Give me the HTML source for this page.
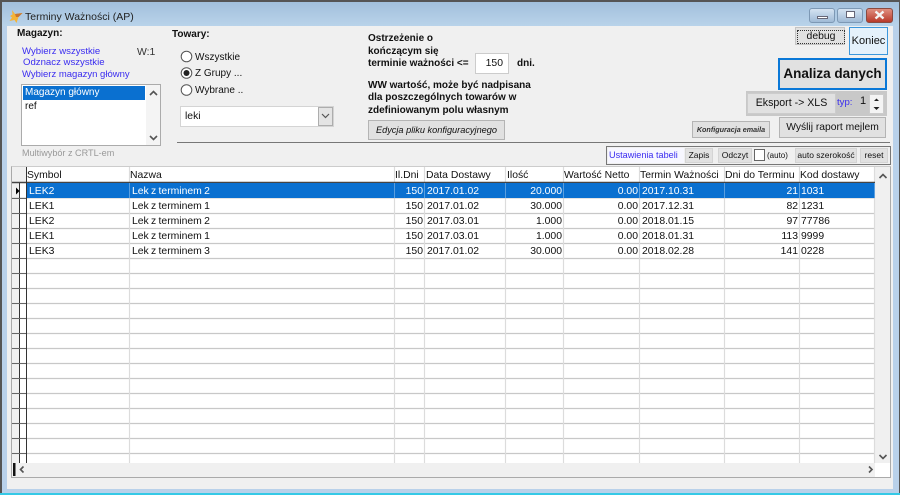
<!DOCTYPE html>
<html><head><meta charset="utf-8">
<style>
html,body{margin:0;padding:0;width:900px;height:495px;overflow:hidden;background:#fff}
#w{position:relative;width:900px;height:495px;overflow:hidden;font-family:"Liberation Sans",sans-serif;font-size:10.4px;color:#111;filter:blur(.35px)}
#w div,#w span.a{position:absolute;white-space:nowrap;box-sizing:border-box}
.b{background:#e1e1e1;border:1px solid #b4b4b4;text-align:center}
.l{color:#3a2cf0}
.h{font-weight:bold}
.c{height:15px;line-height:15px;overflow:hidden;margin-top:1px}
.r{text-align:right}
.n{word-spacing:-.6px}
</style></head><body><div id="w">
<div style="left:0;top:0;width:900px;height:495px;background:#b9d1ea"></div>
<div style="left:0;top:0;width:900px;height:26px;background:linear-gradient(#a0bedb,#b9d3ea)"></div>
<div style="left:0;top:0;width:900px;height:1.5px;background:#555"></div>
<div style="left:0;top:0;width:1.5px;height:495px;background:#555"></div>
<div style="left:898.5px;top:0;width:1.5px;height:495px;background:#555"></div>
<div style="left:0;top:493px;width:900px;height:2px;background:#35c9e6"></div>
<div style="left:7px;top:26px;width:886px;height:463px;background:#f0f0f0"></div>

<svg style="position:absolute;left:9px;top:10px" width="14" height="14" viewBox="0 0 14 14"><path d="M3 0 L6 4 L13.5 3 L9.5 7 L7.5 13 L5.5 10 L0.5 11 L3 7.5 L1 6 L3.5 4.5Z" fill="#f5b335"/><path d="M6 4 L13.5 3 L9.5 7 L7 7Z" fill="#c9752e"/></svg>
<div style="left:25px;top:10px;font-size:10.5px;line-height:14px;color:#222">Terminy Ważności (AP)</div>

<div style="left:809px;top:8px;width:26px;height:15px;border:1px solid #7d98b4;border-radius:3px;background:linear-gradient(#d5e3f1,#9fbad6)"></div>
<div style="left:817px;top:16px;width:11px;height:3px;background:#fff;border:1px solid #667"></div>
<div style="left:837px;top:8px;width:26px;height:15px;border:1px solid #7d98b4;border-radius:3px;background:linear-gradient(#d5e3f1,#9fbad6)"></div>
<div style="left:846px;top:11px;width:9px;height:7px;background:#fff;border:1.5px solid #667"></div>
<div style="left:866px;top:8px;width:27px;height:15px;border:1px solid #8a4a40;border-radius:3px;background:linear-gradient(#e08f80,#b8392a)"></div>
<svg style="position:absolute;left:873px;top:10px" width="13" height="10" viewBox="0 0 13 10"><path d="M2.5 1.5 L10.5 8.5 M10.5 1.5 L2.5 8.5" stroke="#f4f4f4" stroke-width="2.4"/></svg>

<div class="h" style="left:17px;top:27px;line-height:13px;font-size:10px">Magazyn:</div>
<div class="l" style="left:22px;top:46px;line-height:12px;font-size:9.6px">Wybierz wszystkie</div>
<div class="l" style="left:23px;top:57px;line-height:12px;font-size:9.6px">Odznacz wszystkie</div>
<div class="l" style="left:22px;top:69px;line-height:12px;font-size:9.5px">Wybierz magazyn główny</div>
<div style="left:137px;top:46px;line-height:13px;color:#333">W:1</div>
<div style="left:21px;top:84px;width:140px;height:62px;background:#fff;border:1px solid #ababab"></div>
<div style="left:146px;top:85px;width:14px;height:60px;background:#f4f4f4"></div>
<div style="left:23px;top:86px;width:122px;height:14px;background:#0a70d0;color:#fff;line-height:14px;padding-left:2px;font-size:10px">Magazyn główny</div>
<div style="left:25px;top:100px;line-height:14px;font-size:10px">ref</div>
<svg style="position:absolute;left:148px;top:88px" width="11" height="55" viewBox="0 0 11 55"><path d="M2 7 L5.5 3.5 L9 7" fill="none" stroke="#555" stroke-width="1.6"/><path d="M2 48 L5.5 51.5 L9 48" fill="none" stroke="#555" stroke-width="1.6"/></svg>
<div style="left:22px;top:147px;font-size:9.1px;line-height:12px;color:#999">Multiwybór z CRTL-em</div>

<div class="h" style="left:172px;top:28px;line-height:13px;font-size:10px">Towary:</div>
<svg style="position:absolute;left:180px;top:50px" width="14" height="48" viewBox="0 0 14 48"><circle cx="6.5" cy="6.5" r="5.3" fill="#fff" stroke="#555"/><circle cx="6.5" cy="23" r="5.3" fill="#fff" stroke="#555"/><circle cx="6.5" cy="23" r="3" fill="#222"/><circle cx="6.5" cy="40" r="5.3" fill="#fff" stroke="#555"/></svg>
<div style="left:195px;top:51px;line-height:13px;font-size:10px">Wszystkie</div>
<div style="left:195px;top:67px;line-height:13px;font-size:10px">Z Grupy ...</div>
<div style="left:195px;top:84px;line-height:13px;font-size:10px">Wybrane ..</div>
<div style="left:180px;top:106px;width:154px;height:21px;background:#fff;border:1px solid #d4d4d4;line-height:19px;padding-left:4px">leki</div>
<div style="left:318px;top:107px;width:15px;height:19px;background:#e4e4e4;border:1px solid #adadad"></div>
<svg style="position:absolute;left:320px;top:112px" width="11" height="8" viewBox="0 0 11 8"><path d="M2 2 L5.5 5.5 L9 2" fill="none" stroke="#555" stroke-width="1.2"/></svg>
<div style="left:177px;top:142px;width:713px;height:1px;background:#777"></div>

<div class="h" style="left:368px;top:32px;line-height:13px;font-size:10px">Ostrzeżenie o</div>
<div class="h" style="left:368px;top:45px;line-height:13px;font-size:10px">kończącym się</div>
<div class="h" style="left:368px;top:57px;line-height:13px;font-size:10px">terminie ważności &lt;=</div>
<div style="left:475px;top:53px;width:34px;height:21px;background:#fff;border:1px solid #ccc;text-align:right;padding-right:5px;line-height:19px">150</div>
<div class="h" style="left:517px;top:57px;line-height:13px;font-size:10px">dni.</div>
<div class="h" style="left:368px;top:79px;line-height:13px;font-size:10px">WW wartość, może być nadpisana</div>
<div class="h" style="left:368px;top:91px;line-height:13px;font-size:10px">dla poszczególnych towarów w</div>
<div class="h" style="left:368px;top:104px;line-height:13px;font-size:10px">zdefiniowanym polu własnym</div>
<div class="b" style="left:368px;top:120px;width:137px;height:20px;line-height:18px;font-size:9.2px;font-style:italic">Edycja pliku konfiguracyjnego</div>

<div class="b" style="left:795px;top:27px;width:50px;height:18px;line-height:15px;border:1px solid #c4c4c4"><span style="position:absolute;left:1px;top:2px;width:46px;height:12px;border:1px dotted #333;line-height:11px">debug</span></div>
<div style="left:849px;top:27px;width:39px;height:28px;background:#e5f1fb;border:1px solid #3c97dc;text-align:center;line-height:26px;font-size:11px">Koniec</div>
<div style="left:778px;top:58px;width:109px;height:32px;background:#e1e1e1;border:2px solid #0a78d7;text-align:center;line-height:27px;font-weight:bold;font-size:13.5px">Analiza danych</div>
<div style="left:746px;top:91px;width:141px;height:25px;background:#c8c8c8"></div>
<div class="b" style="left:747px;top:93px;width:89px;height:21px;line-height:19px;font-size:10.6px;border-color:#ccc">Eksport -&gt; XLS</div>
<div class="l" style="left:837px;top:96px;line-height:13px;font-size:9.6px">typ:</div>
<div style="left:860px;top:95px;line-height:13px;font-size:11px">1</div>
<div style="left:869px;top:94px;width:15px;height:20px;background:#f4f4f4;border:1px solid #ccc"></div>
<svg style="position:absolute;left:871px;top:96px" width="11" height="16" viewBox="0 0 11 16"><path d="M3 5 L5.5 2.5 L8 5Z" fill="#222"/><path d="M2.5 11 L5.5 14 L8.5 11Z" fill="#222"/></svg>
<div class="b" style="left:692px;top:121px;width:78px;height:17px;line-height:15px;font-size:7.2px;font-style:italic;font-weight:bold;color:#333">Konfiguracja emaila</div>
<div class="b" style="left:779px;top:117px;width:107px;height:21px;line-height:19px;font-size:10.3px">Wyślij raport mejlem</div>

<div style="left:606px;top:146px;width:285px;height:19px;background:#f0f0f0;border:1px solid #777"></div>
<div style="left:608px;top:148px;width:76px;height:15px;background:#f7f7ff"></div>
<div class="l" style="left:609px;top:149px;line-height:13px;font-size:9.1px">Ustawienia tabeli</div>
<div class="b" style="left:685px;top:148px;width:28px;height:15px;line-height:13px;font-size:8.5px;border-color:#d4d4d4">Zapis</div>
<div class="b" style="left:718px;top:148px;width:34px;height:15px;line-height:13px;font-size:8.5px;border-color:#d4d4d4">Odczyt</div>
<div style="left:754px;top:149px;width:11px;height:12px;background:#fff;border:1px solid #666"></div>
<div style="left:767px;top:149px;line-height:13px;font-size:8px">(auto)</div>
<div class="b" style="left:795px;top:148px;width:62px;height:15px;line-height:13px;font-size:8.5px;border-color:#d4d4d4">auto szerokość</div>
<div class="b" style="left:860px;top:148px;width:28px;height:15px;line-height:13px;font-size:8.5px;border-color:#d4d4d4">reset</div>

<div style="left:11px;top:166px;width:880px;height:312px;background:#fff;border:1px solid #aaa;border-top-color:#ccc"></div>
<div style="left:12px;top:167px;width:14px;height:15px;background:#f0f0f0"></div>
<div style="left:12px;top:183px;width:7px;height:280px;background:#f0f0f0"></div>
<div style="left:875px;top:167px;width:15px;height:296px;background:#f0f0f0"></div>
<div style="left:12px;top:463px;width:878px;height:14px;background:#f0f0f0"></div>
<div style="left:875px;top:463px;width:15px;height:14px;background:#fff"></div>

<svg style="position:absolute;left:0;top:0;width:900px;height:495px" viewBox="0 0 900 495">
<g stroke="#c8c8c8" stroke-width="1.2">
<path d="M12 213.5H875M12 228.5H875M12 243.5H875M12 258.5H875M12 273.5H875M12 288.5H875M12 303.5H875M12 318.5H875M12 333.5H875M12 348.5H875M12 363.5H875M12 378.5H875M12 393.5H875M12 408.5H875M12 423.5H875M12 438.5H875M12 453.5H875"/>
</g>
<g stroke="#dcdcdc" stroke-width="1.2">
<path d="M129.5 167V463M394.5 167V463M424.5 167V463M505.5 167V463M563.5 167V463M639.5 167V463M724.5 167V463M799.5 167V463M874.5 167V463"/>
</g>
<path d="M12 182.5H875" stroke="#444" stroke-width="1.4"/>
<path d="M12 198H875" stroke="#c8c8c8" stroke-width="1"/>
<g stroke="#333" stroke-width="1"><path d="M19.5 183V463M26.5 167V463"/></g>
<g stroke="#666" stroke-width="1"><path d="M12 198.5H26M12 213.5H26M12 228.5H26M12 243.5H26M12 258.5H26M12 273.5H26M12 288.5H26M12 303.5H26M12 318.5H26M12 333.5H26M12 348.5H26M12 363.5H26M12 378.5H26M12 393.5H26M12 408.5H26M12 423.5H26M12 438.5H26M12 453.5H26"/></g>
<path d="M16 187.5 L19.5 191 L16 194.5Z" fill="#000"/>
<path d="M13 463H15.5V476H13Z" fill="#111"/>
<path d="M23.5 466.5 L20.5 469.5 L23.5 472.5" fill="none" stroke="#555" stroke-width="1.6"/>
<path d="M869 466.5 L872 469.5 L869 472.5" fill="none" stroke="#555" stroke-width="1.6"/>
<path d="M879.5 178 L883 174.5 L886.5 178" fill="none" stroke="#555" stroke-width="1.6"/>
<path d="M879.5 455 L883 458.5 L886.5 455" fill="none" stroke="#555" stroke-width="1.6"/>
</svg>

<div style="left:27px;top:183px;width:848px;height:15px;background:#0a70d0"></div>
<svg style="position:absolute;left:0;top:183px;width:900px;height:15px" viewBox="0 0 900 15"><path d="M129.5 0V15M394.5 0V15M424.5 0V15M505.5 0V15M563.5 0V15M639.5 0V15M724.5 0V15M799.5 0V15M874.5 0V15" stroke="#5a9ede" stroke-width="1"/></svg>

<div class="c" style="left:27px;top:167px">Symbol</div>
<div class="c" style="left:130px;top:167px">Nazwa</div>
<div class="c" style="left:395px;top:167px">Il.Dni</div>
<div class="c" style="left:426px;top:167px">Data Dostawy</div>
<div class="c" style="left:507px;top:167px">Ilość</div>
<div class="c" style="left:564px;top:167px">Wartość Netto</div>
<div class="c" style="left:640px;top:167px">Termin Ważności</div>
<div class="c" style="left:725px;top:167px">Dni do Terminu</div>
<div class="c" style="left:800px;top:167px">Kod dostawy</div>

<div class="c" style="left:29px;top:183px;color:#fff">LEK2</div><div class="c n" style="left:132px;top:183px;color:#fff">Lek z terminem 2</div><div class="c r" style="left:394px;width:29px;top:183px;color:#fff">150</div><div class="c" style="left:427px;top:183px;color:#fff">2017.01.02</div><div class="c r" style="left:505px;width:57px;top:183px;color:#fff">20.000</div><div class="c r" style="left:563px;width:75px;top:183px;color:#fff">0.00</div><div class="c" style="left:642px;top:183px;color:#fff">2017.10.31</div><div class="c r" style="left:724px;width:74px;top:183px;color:#fff">21</div><div class="c" style="left:801px;top:183px;color:#fff">1031</div>

<div class="c" style="left:29px;top:198px">LEK1</div><div class="c n" style="left:132px;top:198px">Lek z terminem 1</div><div class="c r" style="left:394px;width:29px;top:198px">150</div><div class="c" style="left:427px;top:198px">2017.01.02</div><div class="c r" style="left:505px;width:57px;top:198px">30.000</div><div class="c r" style="left:563px;width:75px;top:198px">0.00</div><div class="c" style="left:642px;top:198px">2017.12.31</div><div class="c r" style="left:724px;width:74px;top:198px">82</div><div class="c" style="left:801px;top:198px">1231</div>

<div class="c" style="left:29px;top:213px">LEK2</div><div class="c n" style="left:132px;top:213px">Lek z terminem 2</div><div class="c r" style="left:394px;width:29px;top:213px">150</div><div class="c" style="left:427px;top:213px">2017.03.01</div><div class="c r" style="left:505px;width:57px;top:213px">1.000</div><div class="c r" style="left:563px;width:75px;top:213px">0.00</div><div class="c" style="left:642px;top:213px">2018.01.15</div><div class="c r" style="left:724px;width:74px;top:213px">97</div><div class="c" style="left:801px;top:213px">77786</div>

<div class="c" style="left:29px;top:228px">LEK1</div><div class="c n" style="left:132px;top:228px">Lek z terminem 1</div><div class="c r" style="left:394px;width:29px;top:228px">150</div><div class="c" style="left:427px;top:228px">2017.03.01</div><div class="c r" style="left:505px;width:57px;top:228px">1.000</div><div class="c r" style="left:563px;width:75px;top:228px">0.00</div><div class="c" style="left:642px;top:228px">2018.01.31</div><div class="c r" style="left:724px;width:74px;top:228px">113</div><div class="c" style="left:801px;top:228px">9999</div>

<div class="c" style="left:29px;top:243px">LEK3</div><div class="c n" style="left:132px;top:243px">Lek z terminem 3</div><div class="c r" style="left:394px;width:29px;top:243px">150</div><div class="c" style="left:427px;top:243px">2017.01.02</div><div class="c r" style="left:505px;width:57px;top:243px">30.000</div><div class="c r" style="left:563px;width:75px;top:243px">0.00</div><div class="c" style="left:642px;top:243px">2018.02.28</div><div class="c r" style="left:724px;width:74px;top:243px">141</div><div class="c" style="left:801px;top:243px">0228</div>
</div></body></html>
